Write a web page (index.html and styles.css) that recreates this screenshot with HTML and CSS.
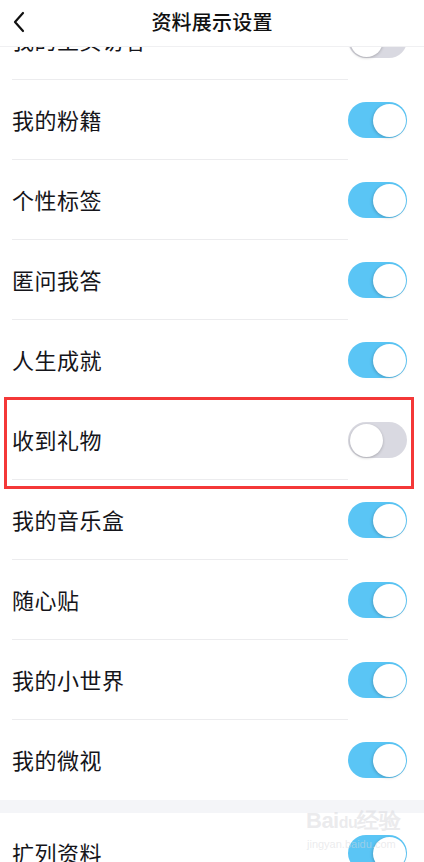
FILE: index.html
```html
<!DOCTYPE html>
<html lang="zh">
<head>
<meta charset="utf-8">
<link rel="stylesheet" href="styles.css">
</head>
<body>
<div class="page">
  <header class="topbar">
    <svg class="back" width="14" height="22" viewBox="0 0 14 22"><path d="M11 2 L3 11 L11 20" fill="none" stroke="#111" stroke-width="2.2" stroke-linecap="round" stroke-linejoin="round"/></svg>
    <div class="title">资料展示设置</div>
  </header>

  <div class="list">
    <div class="row"><span class="label">我的主页访客</span><span class="switch"></span></div>
    <div class="row"><span class="label">我的粉籍</span><span class="switch on"></span></div>
    <div class="row"><span class="label">个性标签</span><span class="switch on"></span></div>
    <div class="row"><span class="label">匿问我答</span><span class="switch on"></span></div>
    <div class="row"><span class="label">人生成就</span><span class="switch on"></span></div>
    <div class="row highlighted"><span class="label">收到礼物</span><span class="switch"></span><span class="redbox"></span></div>
    <div class="row"><span class="label">我的音乐盒</span><span class="switch on"></span></div>
    <div class="row"><span class="label">随心贴</span><span class="switch on"></span></div>
    <div class="row"><span class="label">我的小世界</span><span class="switch on"></span></div>
    <div class="row last"><span class="label">我的微视</span><span class="switch on"></span></div>
  </div>
  <div class="gap"></div>
  <div class="list">
    <div class="row"><span class="label">扩列资料</span><span class="switch on"></span></div>
  </div>

  <div class="watermark"><span class="wm-big">Bai<span class="wm-du">du</span>经验</span><span class="wm-small">jingyan.baidu.com</span></div>
</div>
</body>
</html>
```
FILE: styles.css
```css
* { box-sizing: border-box; }
html, body {
  margin: 0;
  padding: 0;
  background: #fff;
}
body {
  width: 424px;
  height: 862px;
  overflow: hidden;
  font-family: "Noto Sans CJK SC", "Noto Sans", sans-serif;
  color: #111;
}
.page {
  position: relative;
  width: 424px;
  height: 862px;
  overflow: hidden;
}
.topbar {
  position: absolute;
  top: 0;
  left: 0;
  right: 0;
  height: 47px;
  background: #fff;
  border-bottom: 1px solid #f0f0f2;
  display: flex;
  align-items: center;
  justify-content: center;
  z-index: 5;
}
.back {
  position: absolute;
  left: 12px;
  top: 11px;
}
.title {
  font-size: 20px;
  font-weight: 500;
  color: #111;
  letter-spacing: 0.2px;
  margin-top: -3px;
}
.list {
  display: flex;
  flex-direction: column;
}
.row {
  position: relative;
  height: 80px;
  display: flex;
  align-items: center;
  justify-content: space-between;
  padding: 0 17px 0 12px;
}
.row::after {
  content: "";
  position: absolute;
  left: 12px;
  width: 336px;
  bottom: 0;
  height: 1px;
  background: #ececee;
}
.row.last::after { display: none; }
.label {
  font-size: 22px;
  line-height: 1;
  letter-spacing: 0.5px;
  color: #15151a;
  margin-top: -2px;
}
.switch {
  position: relative;
  width: 59px;
  height: 36px;
  border-radius: 18px;
  background: #d9d9e1;
  flex: none;
}
.switch::after {
  content: "";
  position: absolute;
  top: 1.5px;
  left: 1.5px;
  width: 33px;
  height: 33px;
  border-radius: 50%;
  background: #fff;
  box-shadow: 0 1px 3px rgba(0,0,0,0.22);
}
.switch.on {
  background: #5ac5f5;
}
.switch.on::after {
  left: auto;
  right: 1.5px;
  box-shadow: -1px 1px 3px rgba(0,0,0,0.18);
}
.redbox {
  position: absolute;
  left: 4px;
  right: 10px;
  top: -3px;
  bottom: -9px;
  border: 3px solid #f43838;
  pointer-events: none;
}
.gap {
  height: 13px;
  background: #f4f5f8;
}
.watermark {
  position: absolute;
  left: 306px;
  top: 810px;
  display: flex;
  flex-direction: column;
  color: rgba(215, 215, 220, 0.5);
  font-family: "Liberation Sans", sans-serif;
  z-index: 3;
}
.wm-big {
  font-size: 22px;
  font-weight: 700;
  line-height: 1;
  letter-spacing: -0.5px;
}
.wm-du { font-size: 16px; }
.wm-small {
  font-size: 11px;
  margin-top: 6px;
  padding-left: 1px;
}
```
